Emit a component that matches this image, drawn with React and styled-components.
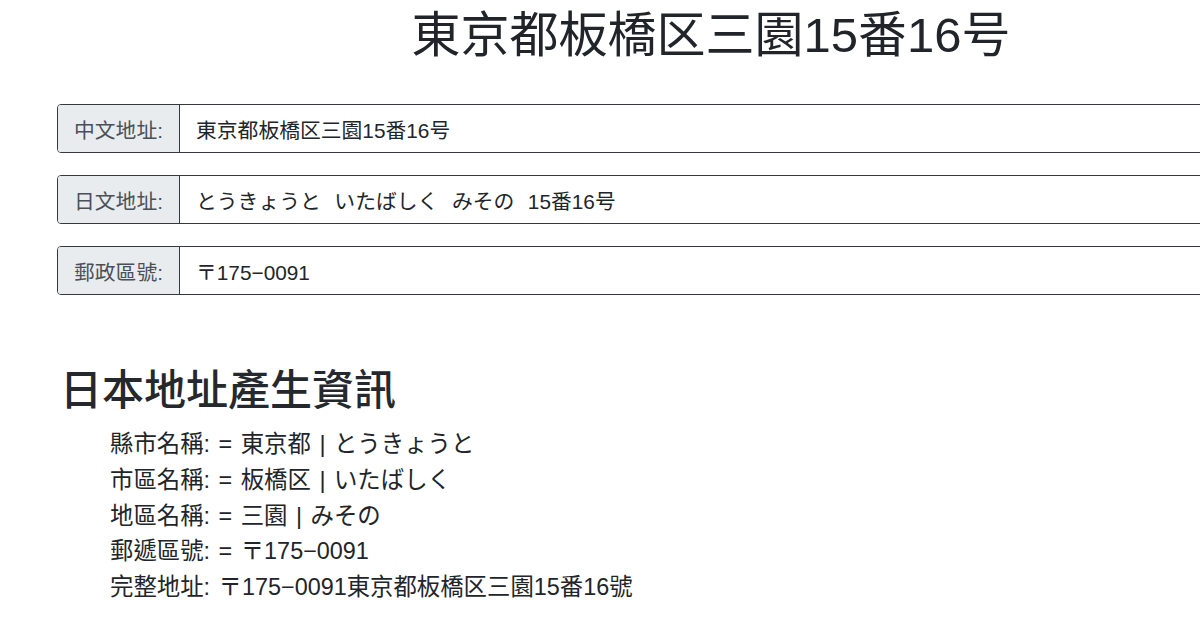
import React from "react";
import styled, { createGlobalStyle } from "styled-components";

const Global = createGlobalStyle`
  html, body { margin: 0; padding: 0; background: #fff; }
  body {
    overflow: hidden;
    width: 1200px;
    height: 630px;
    font-family: "Liberation Sans", "Noto Sans CJK TC", sans-serif;
    color: #212529;
  }
`;

const Container = styled.div`
  width: 1308px;
  margin-left: 57px;
`;

const Title = styled.h1`
  margin: 0;
  padding-top: 5px;
  text-align: center;
  font-size: 49px;
  font-weight: 400;
  line-height: 60px;
  color: #212529;
`;

const Groups = styled.div`
  margin-top: 39px;
  display: flex;
  flex-direction: column;
  gap: 22px;
`;

const Group = styled.div`
  display: flex;
  height: 49px;
  border: 1px solid #35383c;
  border-radius: 4px 0 0 4px;
  box-sizing: border-box;
`;

const Label = styled.div`
  width: 122px;
  flex: none;
  display: flex;
  align-items: center;
  padding-left: 16px;
  box-sizing: border-box;
  background: #e9ecef;
  border-right: 1px solid #35383c;
  border-radius: 3px 0 0 3px;
  font-size: 20.8px;
  color: #495057;
`;

const Value = styled.div`
  flex: 1;
  display: flex;
  align-items: center;
  padding-left: 16px;
  font-size: 20.8px;
  word-spacing: 1px;
  color: #212529;
  white-space: pre;
`;

const Heading = styled.h2`
  margin: 71px 0 0 3px;
  font-size: 42px;
  font-weight: 500;
  line-height: 50px;
  color: #25282c;
`;

const List = styled.ul`
  list-style: none;
  margin: 11px 0 0;
  padding-left: 53px;
`;

const Item = styled.li`
  font-size: 23.4px;
  line-height: 35.8px;
  word-spacing: 2px;
  color: #212529;
  white-space: pre;
`;

const rows = [
  ["中文地址:", "東京都板橋区三園15番16号"],
  ["日文地址:", "とうきょうと  いたばしく  みその  15番16号"],
  ["郵政區號:", "〒175−0091"],
];

const items = [
  "縣市名稱: = 東京都 | とうきょうと",
  "市區名稱: = 板橋区 | いたばしく",
  "地區名稱: = 三園 | みその",
  "郵遞區號: = 〒175−0091",
  "完整地址: 〒175−0091東京都板橋区三園15番16號",
];

export default function App() {
  return (
    <>
      <Global />
      <Container>
        <Title>東京都板橋区三園15番16号</Title>
        <Groups>
          {rows.map(([l, v]) => (
            <Group key={l}>
              <Label>{l}</Label>
              <Value>{v}</Value>
            </Group>
          ))}
        </Groups>
        <Heading>日本地址產生資訊</Heading>
        <List>
          {items.map((t) => (
            <Item key={t}>{t}</Item>
          ))}
        </List>
      </Container>
    </>
  );
}
